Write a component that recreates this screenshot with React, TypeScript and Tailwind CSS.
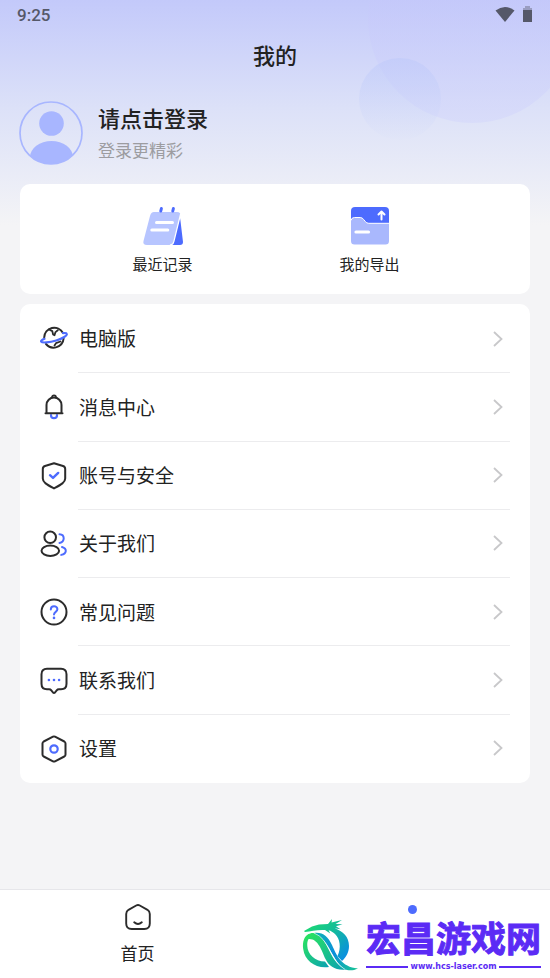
import React from 'react';

const INK = '#2b2b2b';
const BLUE = '#4d6bfe';

const GlobeIcon = () => (
  <svg viewBox="0 0 28 28" className="size-7" fill="none" strokeWidth="2" strokeLinecap="round" strokeLinejoin="round">
    <path d="M4.200 12.500a10 10 0 0 1 18.800-4.500M6 19a10 10 0 0 0 17.600-5.500" stroke={INK} />
    <path d="M9 4.500l3.300 1.600.8 3.400 1.400.8 1-3.200 2.300-1.800M14.500 20.500l1.500-2.300 4.500-1.700" stroke={INK} strokeWidth="1.800" />
    <path d="M4.500 13.800c-2.500 1-3.800 2-3.300 2.800 1 1.600 8.400.9 15-1.100s11.300-5 10.600-6.700c-.3-.8-1.800-.9-3.800-.6" stroke={BLUE} strokeWidth="2.200" />
  </svg>
);

const BellIcon = () => (
  <svg viewBox="0 0 28 28" className="size-7" fill="none" strokeWidth="2" strokeLinecap="round" strokeLinejoin="round">
    <path d="M11 22.200a3 3 0 0 0 6 0" stroke={BLUE} strokeWidth="2.200" />
    <path d="M6.500 20V12a7.500 7.500 0 0 1 15 0v8M5.500 20.300h17" stroke={INK} />
    <path d="M12 4.300a2 2 0 1 1 4 0" stroke={INK} strokeWidth="1.800" />
  </svg>
);

const ShieldIcon = () => (
  <svg viewBox="0 0 28 28" className="size-7" fill="none" strokeLinecap="round" strokeLinejoin="round">
    <path d="M14 1.200L5 4Q2.800 4.700 2.800 7v9.500c0 4 4.400 6.200 11.200 9.900 6.800-3.700 11.200-5.900 11.200-9.900V7q0-2.300-2.200-3z" stroke={INK} strokeWidth="2" />
    <path d="M10 13.200l3 2.700 5.200-5" stroke={BLUE} strokeWidth="2.400" />
  </svg>
);

const UsersIcon = () => (
  <svg viewBox="0 0 28 28" className="size-7" fill="none" strokeWidth="2" strokeLinecap="round">
    <circle cx="10.200" cy="7.300" r="5.800" stroke={INK} />
    <ellipse cx="10.300" cy="20.800" rx="8.800" ry="5.200" stroke={INK} />
    <path d="M19.500 4.300c5.500.2 5.700 7.700 0 8.600M22 17c5.300 1.700 5 6.500-.8 7.900" stroke={BLUE} />
  </svg>
);

const HelpIcon = () => (
  <svg viewBox="0 0 28 28" className="size-7" fill="none" strokeWidth="2" strokeLinecap="round" strokeLinejoin="round">
    <circle cx="14" cy="14" r="12.500" stroke={INK} />
    <path d="M10.800 11.500c0-4.300 6.600-4.200 6.600-.2 0 2.600-3.400 2.600-3.400 5.200" stroke={BLUE} />
    <circle cx="14" cy="19.900" r="1.300" fill={BLUE} />
  </svg>
);

const ChatIcon = () => (
  <svg viewBox="0 0 28 28" className="size-7" fill="none" strokeWidth="2" strokeLinejoin="round">
    <path d="M7 1.800h14q5.500 0 5.500 5.500v9.500q0 5.500-5.500 5.500h-2q-1.500 0-2.300 1L15 25.500q-1 1-2 0l-1.700-2.200q-.8-1-2.300-1H7q-5.500 0-5.500-5.500V7.300q0-5.500 5.500-5.500z" stroke={INK} />
    <g fill={BLUE}>
      <circle cx="8.900" cy="13" r="1.300" />
      <circle cx="14" cy="13" r="1.300" />
      <circle cx="19.100" cy="13" r="1.300" />
    </g>
  </svg>
);

const SettingsIcon = () => (
  <svg viewBox="0 0 28 28" className="size-7" fill="none" strokeWidth="2" strokeLinejoin="round">
    <path d="M13 1.700L3.700 6.500q-1.200.7-1.200 2v11q0 1.300 1.200 2l9.300 4.800q1 .5 2 0l9.300-4.800q1.200-.7 1.200-2v-11q0-1.300-1.200-2L15 1.700q-1-.5-2 0z" stroke={INK} />
    <circle cx="14" cy="14" r="3.700" stroke={BLUE} strokeWidth="2.200" />
  </svg>
);

const NoteIcon = () => (
  <svg viewBox="0 0 42 40" className="h-10 w-[42px]">
    <path d="M35 8q3 2 3.500 8l2.500 21q0 3-3 3H30z" fill={BLUE} />
    <path d="M12 7h23q4 0 3.200 4L32 36q-.9 4-5 4H5q-4.500 0-3.500-4L8 11q1-4 4-4z" fill="#b7c5ff" />
    <path d="M38.600 9L32 36q-.9 4-4 4" fill="none" stroke="#fff" strokeWidth="1.200" />
    <path d="M18.800 6l.6-2.500M30.800 6l.6-2.500" stroke={BLUE} strokeWidth="3" strokeLinecap="round" />
    <path d="M14.500 17.500h16M9.800 25h16" stroke="#fff" strokeWidth="3" strokeLinecap="round" />
  </svg>
);

const FolderIcon = () => (
  <svg viewBox="0 0 40 40" className="size-10">
    <path d="M5 2h30q4 0 4 4v16H1V6q0-4 4-4z" fill={BLUE} />
    <path d="M1 16q0-3.500 3.500-3.500h5.700q2 0 3.500 2l1.600 2q1.300 1.800 3.500 1.800H39V36q0 3.500-3.500 3.500h-31Q1 39.500 1 36z" fill="#a9b8fd" />
    <path d="M1 15.500q.5-3 3.500-3h5.700q2 0 3.500 2l1.600 2q1.300 1.800 3.500 1.800H39" fill="none" stroke="#fff" strokeWidth="1" />
    <path d="M6 27h12.500" stroke="#fff" strokeWidth="3.200" strokeLinecap="round" />
    <path d="M31.500 14.500V7M28.500 9.500l3-3 3 3" fill="none" stroke="#fff" strokeWidth="2" strokeLinecap="round" strokeLinejoin="round" />
  </svg>
);

const HomeIcon = () => (
  <svg viewBox="0 0 28 28" className="size-7" fill="none" stroke={INK} strokeWidth="1.900" strokeLinecap="round" strokeLinejoin="round">
    <path d="M12.200 2.500L4.500 6.800Q2.200 8.200 2.200 11v9.500q0 5.500 5.500 5.500h12.600q5.500 0 5.500-5.500V11q0-2.800-2.300-4.200l-7.700-4.300q-1.800-.9-3.600 0z" />
    <path d="M10.200 19.300q3.800 3.400 7.600 0" />
  </svg>
);

const Avatar = () => (
  <svg viewBox="0 0 64 64" className="size-16 shrink-0">
    <clipPath id="avatar-clip"><circle cx="32" cy="32" r="31" /></clipPath>
    <g clipPath="url(#avatar-clip)" fill="#a8b6ff">
      <circle cx="32.500" cy="22.500" r="12.300" />
      <ellipse cx="32.500" cy="56" rx="21.500" ry="16" />
    </g>
    <circle cx="32" cy="32" r="31" fill="none" stroke="#a8b6ff" strokeWidth="1.700" />
  </svg>
);

const DragonLogo = () => (
  <svg viewBox="0 0 56 54" className="h-[54px] w-14 shrink-0">
    <defs>
      <linearGradient id="dragon-body" x1="0" y1="0" x2="1" y2="0.800">
        <stop offset="0" stopColor="#1fe06a" />
        <stop offset="0.500" stopColor="#14bf96" />
        <stop offset="1" stopColor="#0a8fe0" />
      </linearGradient>
      <linearGradient id="dragon-ring" x1="0" y1="0" x2="1" y2="1">
        <stop offset="0" stopColor="#2be65c" />
        <stop offset="1" stopColor="#0aa0b4" />
      </linearGradient>
      <linearGradient id="dragon-wave" x1="0" y1="0" x2="1" y2="1">
        <stop offset="0" stopColor="#0cb0b4" />
        <stop offset="0.500" stopColor="#0a8fdc" />
        <stop offset="1" stopColor="#17c692" />
      </linearGradient>
    </defs>
    <path d="M2 13L10 8.500l7-2 9-.5L30 1l-.5 3.500L40 2l-6.500 4 7 .3-6.500 2 4.500 3-6-1C41 13 47 19 47 28c0 6-2.500 11-7 15l-4.500-5c4-8 2.500-17.500-2.500-22-2-1.800-4-3-6.500-3.700l1.800 3.200-5.300-3.500C16 11.500 9 13 3 14z" fill="url(#dragon-body)" />
    <path d="M7 16C2 18 .3 24 1.200 31 2.800 43 14 51 27 49l-4-5.500C13 43.500 5.500 36 5.300 28c-.1-4 .2-6 2.700-9z" fill="url(#dragon-ring)" />
    <path d="M2.500 22C4 16 10 13.500 15 16c12 7 12 26 27 34.500 1 .5 2 .9 3 1C34 53 27 48.500 23.500 41 19 31 15 17 2.500 22z" fill="url(#dragon-ring)" />
    <path d="M12 15c9-1 14 3.500 18 12 4.500 10 9 22 26 23.500-4 1.800-7 2.200-11 1.500C30 46 29 22 12 15z" fill="url(#dragon-wave)" />
    <path d="M12 15C28 21 28 43 43 51.500" fill="none" stroke="#fff" strokeWidth="0.600" />
  </svg>
);

const shortcuts = [
  { label: '最近记录', Icon: NoteIcon },
  { label: '我的导出', Icon: FolderIcon },
];

const menu = [
  { label: '电脑版', Icon: GlobeIcon },
  { label: '消息中心', Icon: BellIcon },
  { label: '账号与安全', Icon: ShieldIcon },
  { label: '关于我们', Icon: UsersIcon },
  { label: '常见问题', Icon: HelpIcon },
  { label: '联系我们', Icon: ChatIcon },
  { label: '设置', Icon: SettingsIcon },
];

const StatusBar = () => (
  <div className="flex h-8 items-center justify-between pl-[17px] pr-[18px] text-[#555869]">
    <span className="font-[Roboto,sans-serif] text-[17px] font-medium">9:25</span>
    <div className="flex items-center gap-2 pb-1">
      <svg viewBox="0 0 20 16" className="h-4 w-5">
        <path d="M.500 4.500q9.500-7 19 0L10 16z" fill="currentColor" />
      </svg>
      <svg viewBox="0 0 9 16" className="h-4 w-[9px]">
        <path d="M2 0h5v2h2v3H0V2h2z" fill="#9a9dc0" />
        <path d="M0 4h9v12H0z" fill="currentColor" />
      </svg>
    </div>
  </div>
);

const MenuRow: React.FC<{ label: string; Icon: React.FC }> = ({ label, Icon }) => (
  <li className="group">
    <button className="flex h-full w-full items-center gap-[10px] px-5 text-left">
      <Icon />
      <span className="flex h-full flex-1 items-center justify-between border-b border-[#ececee] pr-[7px] pl-px text-[19px] group-last:border-transparent">
        {label}
        <svg viewBox="0 0 10 16" className="h-4 w-[10px]" fill="none" stroke="#c8c8ca" strokeWidth="1.800">
          <path d="M1 1l7.500 7L1 15" />
        </svg>
      </span>
    </button>
  </li>
);

export default function App() {
  return (
    <div className="relative flex min-h-screen flex-col overflow-hidden bg-[#f4f4f6] font-['Noto_Sans_CJK_SC',sans-serif] text-[#222]">
      {/* Header backdrop */}
      <div className="absolute inset-x-0 top-0 h-[225px] bg-linear-to-b from-[#c3c9fa] via-[#dce1f8] via-48% to-[#f4f4f6]">
        <div className="absolute -right-[26px] -top-[85px] size-[208px] rounded-full bg-linear-to-b from-[#bcbffa]/50 to-[#d2d5fb]/50" />
        <div className="absolute right-[109px] top-[58px] size-[82px] rounded-full bg-linear-to-b from-[#bcc8fa]/50 to-[#dfe4f8]/20" />
      </div>

      <header className="relative">
        <StatusBar />
        <h1 className="pt-[6px] text-center text-[22px] leading-8 font-medium">我的</h1>
        <button className="mt-[31px] flex w-full items-start gap-[15px] px-[19px] text-left">
          <Avatar />
          <span className="flex flex-col gap-px">
            <span className="text-[22px] leading-8 font-medium">请点击登录</span>
            <span className="text-[17px] leading-8 text-[#9c9ca0]">登录更精彩</span>
          </span>
        </button>
      </header>

      <main className="relative flex flex-col gap-[10px] px-5 pt-[18px] pb-5">
        <section className="grid grid-cols-2 rounded-[10px] bg-white pt-[21px] pr-[57px] pb-[18px] pl-[39px]">
          {shortcuts.map(({ label, Icon }) => (
            <button key={label} className="flex flex-col items-center gap-[7px] text-[15px] leading-6">
              <Icon />
              {label}
            </button>
          ))}
        </section>

        <ul className="grid min-h-[479px] auto-rows-fr rounded-[10px] bg-white pt-px">
          {menu.map(item => (
            <MenuRow key={item.label} {...item} />
          ))}
        </ul>
      </main>

      <nav className="relative mt-auto grid min-h-[89px] grid-cols-2 border-t border-[#e6e6ea] bg-white">
        <button className="flex flex-col items-center gap-[8px] pt-[13px] text-[17px] leading-7">
          <HomeIcon />
          首页
        </button>
        <button aria-label="我的" className="flex flex-col items-center pt-[15px]">
          <span className="size-[9px] rounded-full bg-[#4d6bfe]" />
        </button>

        {/* Site mark laid over the tab bar */}
        <a href="#" className="absolute right-[9px] bottom-[6px] flex items-end gap-2 text-[#5b2bf5]">
          <DragonLogo />
          <span className="flex flex-col">
            <span className="pb-[4px] font-['Liberation_Sans','Noto_Sans_CJK_SC',sans-serif] text-[35px] leading-9 font-bold [-webkit-text-stroke:1px_#5b2bf5]">宏昌游戏网</span>
            <span className="flex items-center gap-[3px] font-['DejaVu_Sans',sans-serif] text-[8px] leading-[10px] font-bold whitespace-nowrap">
              <span className="h-[2px] flex-1 bg-current" />
              www.hcs-laser.com
              <span className="h-[2px] flex-1 bg-current" />
            </span>
          </span>
        </a>
      </nav>
    </div>
  );
}
